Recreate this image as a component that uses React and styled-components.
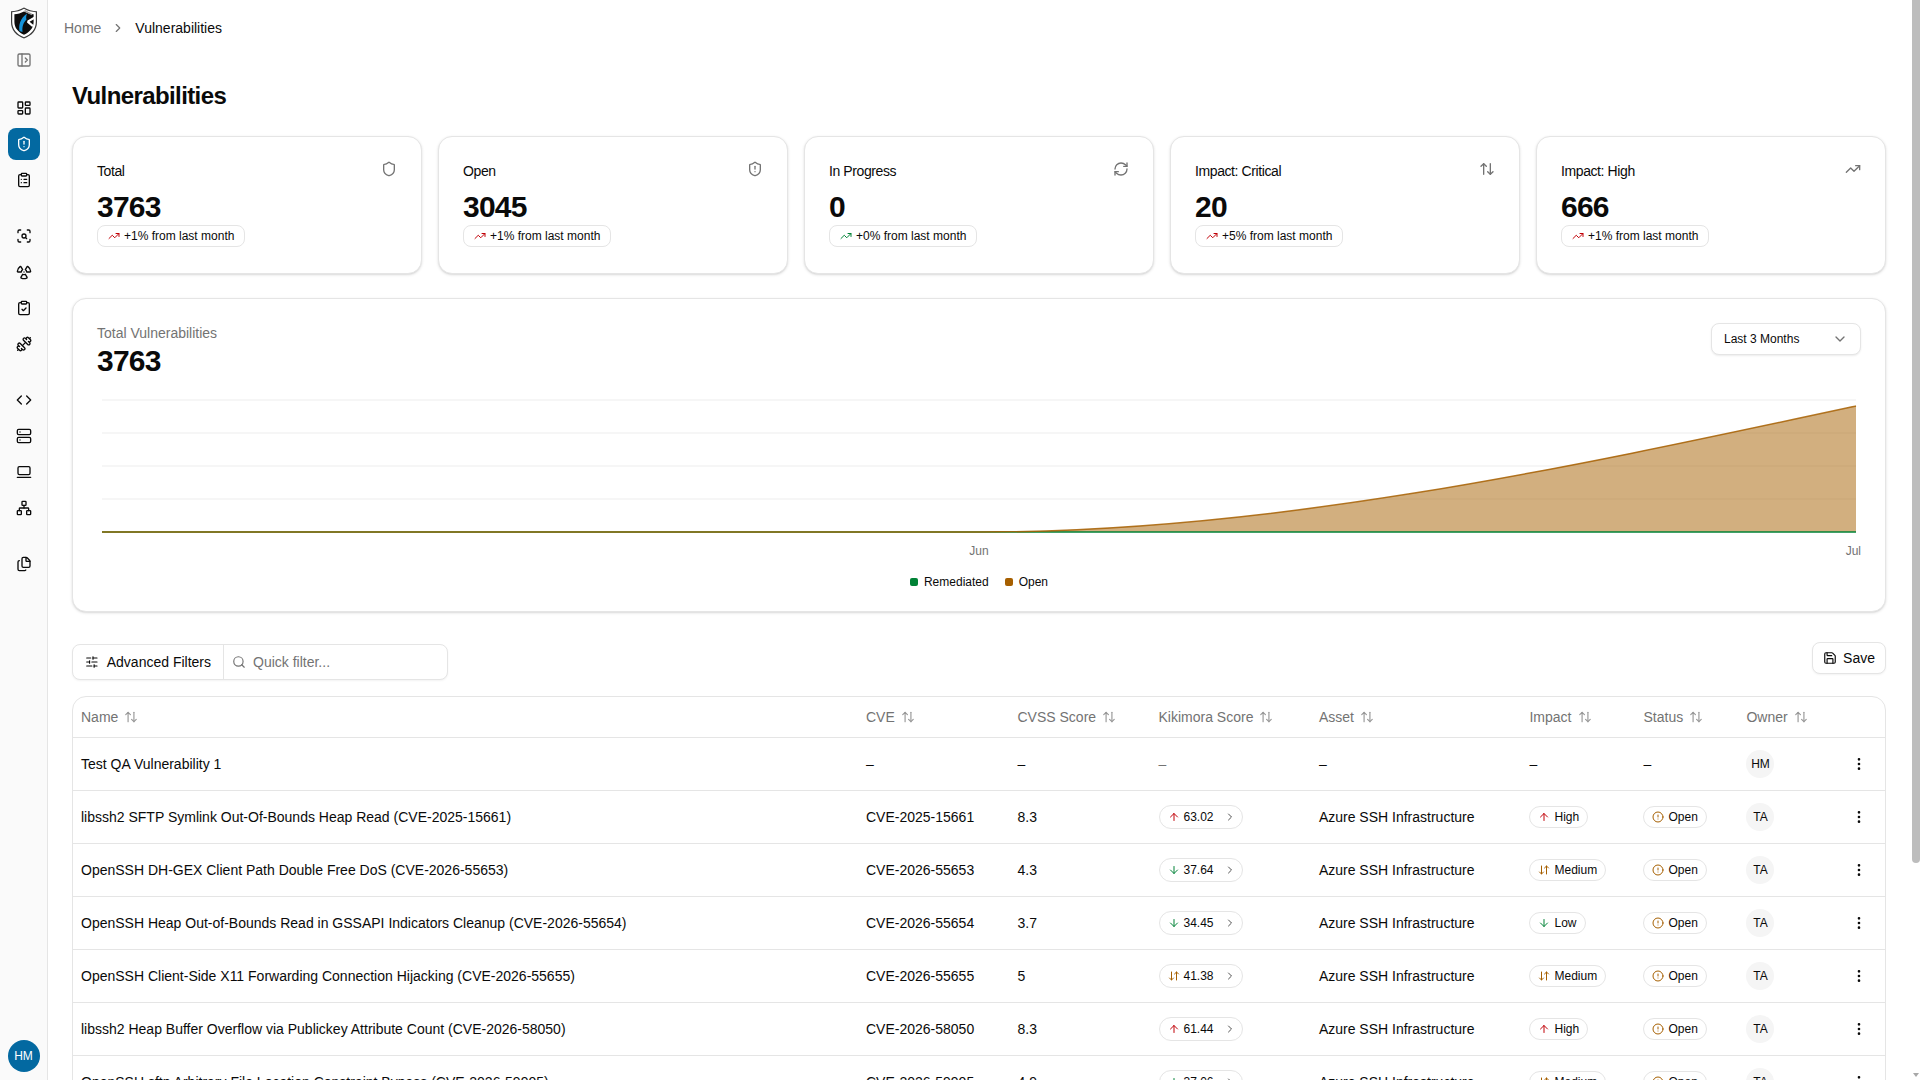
import React from 'react';
import styled, { createGlobalStyle } from 'styled-components';
import {
  PanelLeftOpen, LayoutDashboard, ShieldAlert, ClipboardList, ScanSearch, Radiation, ClipboardCheck,
  Dumbbell, Code, Server, LaptopMinimal, Network, Files, ChevronRight, ChevronDown, Shield, RefreshCw,
  ArrowUpDown, ArrowDownUp, TrendingUp, SlidersHorizontal, Search, Save, ArrowUp, ArrowDown,
  CircleAlert, EllipsisVertical,
} from 'lucide-react';

const RED = '#c10007';
const GREEN = '#008236';
const AMBER = '#a65f00';
const BRAND = '#0369a1';
const MUTED = '#737373';
const LINE = '#e5e5e5';
const INK = '#0a0a0a';

const Global = createGlobalStyle`
  html, body { height: 100%; overflow: hidden; }
  body { margin: 0; background: #fff; color: ${INK}; font-family: "Liberation Sans", Arial, sans-serif; font-size: 14px; line-height: 20px; }
  * { box-sizing: border-box; }
`;

const Shell = styled.div`display: flex; height: 100vh; position: relative;`;

const Sidebar = styled.aside`
  flex: 0 0 48px; height: 100vh;
  display: flex; flex-direction: column; align-items: center;
  padding: 7px 0 8px; background: #fafafa; border-right: 1px solid ${LINE};
`;
const LogoMark = styled.svg`display: block; width: 28px; height: 32px; flex: none;`;
const ToggleButton = styled.button`
  display: flex; margin: 13px 0 24px; padding: 0; border: 0; background: none; color: ${MUTED};
`;
const NavGroups = styled.nav`display: flex; flex-direction: column; gap: 24px;`;
const NavGroup = styled.div`display: flex; flex-direction: column; gap: 4px;`;
const NavButton = styled.button`
  display: flex; align-items: center; justify-content: center;
  width: 32px; height: 32px; padding: 0; border: 0; border-radius: 8px;
  color: ${p => (p.$active ? '#fff' : INK)};
  background: ${p => (p.$active ? BRAND : 'transparent')};
`;
const SideAvatar = styled.div`
  margin-top: auto; width: 32px; height: 32px; border-radius: 50%;
  display: flex; align-items: center; justify-content: center;
  background: ${BRAND}; color: #fff; font-size: 12px;
`;

const Main = styled.main`
  flex: 1; min-width: 0; height: 100vh; overflow-y: scroll; scrollbar-width: none; padding-right: 10px;
`;
const ScrollThumb = styled.div`
  position: absolute; top: 0; right: 0; width: 8px; height: 863px;
  background: #bdbdbd; border-radius: 0 0 4px 4px;
`;
const ScrollArrow = styled.div`
  position: absolute; bottom: 3px; right: 1px; width: 0; height: 0;
  border-left: 3px solid transparent; border-right: 3px solid transparent; border-top: 4px solid #a8a8a8;
`;
const Topbar = styled.header`display: flex; align-items: center; gap: 10px; height: 56px; padding: 0 16px;`;
const Crumb = styled.span`color: ${p => (p.$current ? INK : MUTED)};`;
const CrumbSep = styled(ChevronRight)`color: ${MUTED};`;
const Content = styled.div`padding: 24px 24px 232px;`;
const Title = styled.h1`margin: 0 0 24px; font-size: 24px; line-height: 32px; font-weight: 700; letter-spacing: -0.6px;`;

const StatGrid = styled.section`display: grid; grid-template-columns: repeat(5, 1fr); gap: 16px;`;
const Panel = styled.div`
  background: #fff; border: 1px solid ${LINE}; border-radius: 14px;
  box-shadow: 0 1px 3px rgba(0,0,0,.12), 0 1px 2px -1px rgba(0,0,0,.12);
`;
const StatCard = styled(Panel)`min-height: 138px; padding: 24px;`;
const StatHead = styled.div`display: flex; justify-content: space-between; align-items: flex-start;`;
const StatLabel = styled.div`font-size: 14px; line-height: 20px; letter-spacing: -0.4px;`;
const StatIcon = styled.span`display: flex; color: ${MUTED};`;
const BigNumber = styled.div`font-size: 30px; line-height: 36px; font-weight: 700; letter-spacing: -0.75px; margin-top: ${p => p.$mt || 0}px;`;
const TrendBadge = styled.span`
  display: inline-flex; align-items: center; gap: 4px; height: 22px; padding: 0 10px;
  border: 1px solid ${LINE}; border-radius: 8px; font-size: 12px; line-height: 16px; vertical-align: top;
  svg { color: ${p => (p.$tone === 'good' ? GREEN : RED)}; }
`;

const ChartCard = styled(Panel)`margin-top: 24px; padding: 24px 24px 21px;`;
const ChartHead = styled.div`display: flex; justify-content: space-between; align-items: flex-start;`;
const ChartLabel = styled.div`color: ${MUTED};`;
const RangeSelect = styled.button`
  display: flex; align-items: center; justify-content: space-between;
  width: 150px; height: 32px; padding: 0 12px; background: #fff; color: ${INK};
  border: 1px solid ${LINE}; border-radius: 8px; font: inherit; font-size: 12px;
  box-shadow: 0 1px 2px rgba(0,0,0,.08);
  svg { color: ${MUTED}; }
`;
const ChartSvg = styled.svg`display: block; width: 100%; height: 170px; margin-top: 16px;`;
const AxisText = styled.text`font-size: 12px; fill: ${MUTED}; font-family: "Liberation Sans", Arial, sans-serif;`;
const Legend = styled.div`display: flex; justify-content: center; gap: 16px; margin-top: 9px; font-size: 12px; line-height: 16px;`;
const LegendItem = styled.span`display: flex; align-items: center; gap: 6px;`;
const Swatch = styled.i`width: 8px; height: 8px; border-radius: 2px; background: ${p => p.$c};`;

const Toolbar = styled.div`display: flex; justify-content: space-between; align-items: flex-start; margin-top: 30px;`;
const FilterGroup = styled.div`
  display: flex; height: 36px; width: 376px; margin-top: 2px; border: 1px solid ${LINE}; border-radius: 8px;
  box-shadow: 0 1px 2px rgba(0,0,0,.05); background: #fff;
`;
const FilterButton = styled.button`
  display: flex; align-items: center; gap: 8px; width: 151px; padding: 0 12px; flex: none; white-space: nowrap;
  border: 0; border-right: 1px solid ${LINE}; background: none; color: ${INK}; font: inherit;
`;
const QuickFilter = styled.label`
  display: flex; align-items: center; gap: 7px; flex: 1; padding: 0 8px; color: ${MUTED};
`;
const QuickInput = styled.input`
  flex: 1; min-width: 0; border: 0; outline: 0; padding: 0; font: inherit; color: ${INK};
  &::placeholder { color: ${MUTED}; opacity: 1; }
`;
const SaveButton = styled.button`
  display: flex; align-items: center; gap: 6px; height: 32px; padding: 0 10px; background: #fff; color: ${INK};
  border: 1px solid ${LINE}; border-radius: 8px; font: inherit; box-shadow: 0 1px 2px rgba(0,0,0,.05);
`;

const TableWrap = styled.div`margin-top: 16px; border: 1px solid ${LINE}; border-radius: 14px; overflow: hidden;`;
const Table = styled.table`width: 100%; table-layout: fixed; border-collapse: separate; border-spacing: 0;`;
const Col = styled.col`width: ${p => p.$w}px;`;
const Th = styled.th`
  height: 41px; padding: 0 8px; text-align: left; font-weight: 400; color: ${MUTED};
  border-bottom: 1px solid ${LINE};
`;
const ThInner = styled.span`display: inline-flex; align-items: center; gap: 6px; svg { color: #999; }`;
const Td = styled.td`
  height: 53px; padding: 0 8px; border-bottom: 1px solid ${LINE}; white-space: nowrap;
  color: ${p => (p.$muted ? MUTED : INK)};
`;
const Pill = styled.span`
  display: inline-flex; align-items: center; gap: 4px; height: 22px; padding: 0 8px;
  border: 1px solid ${LINE}; border-radius: 999px; font-size: 12px; line-height: 16px; vertical-align: middle;
  svg { color: ${p => p.$c}; }
`;
const ScorePill = styled(Pill)`
  height: 24px; width: 84px; padding-right: 6px;
  svg:last-child { color: #525252; margin-left: auto; }
`;
const OwnerAvatar = styled.span`
  display: inline-flex; align-items: center; justify-content: center; width: 28px; height: 28px;
  border-radius: 50%; background: #f5f5f5; font-size: 12px; vertical-align: middle;
`;
const RowMenu = styled.button`
  display: flex; align-items: center; justify-content: center; width: 24px; height: 24px;
  padding: 0; border: 0; background: none; color: ${INK};
`;

const Logo = () => (
  <LogoMark viewBox="0 0 28 32" aria-label="logo">
    <path d="M14 .4C10 2.8 5.5 4 1 4.2V15c0 8 5 13.6 13 16.6C22 28.6 27 23 27 15V4.2C22.5 4 18 2.8 14 .4Z" fill="#3a3a3a" />
    <path d="M14 1.8C10.4 3.9 6.4 5 2.2 5.3V15c0 7.2 4.6 12.4 11.8 15.2C21.2 27.4 25.8 22.2 25.8 15V5.3C21.6 5 17.6 3.9 14 1.8Z" fill="#fff" />
    <path d="M14 4.4C11 6 7.6 7 4.4 7.2V15c0 5.8 3.8 10.2 9.6 12.7 5.8-2.5 9.6-6.9 9.6-12.7V7.2C20.4 7 17 6 14 4.4Z" fill="#0c0c0c" />
    <path d="M9.5 24C8.5 18 10 11.5 17 6.5c-1 3-1 4.5-.5 6-3 3-4.5 6.5-4 12.5-1.2-.2-2-.5-3-1Z" fill="#1592d8" />
    <path d="M17.5 13.5 24 9.8v2.4l-4.5 2.5 4 3.2-1.2 2-5.3-4.3Z" fill="#fff" />
    <path d="M15 3 22.5 7l-1 1.3L14 4.2Z" fill="#9a9a9a" />
  </LogoMark>
);

const navGroups = [
  [[LayoutDashboard], [ShieldAlert, true], [ClipboardList]],
  [[ScanSearch], [Radiation], [ClipboardCheck], [Dumbbell]],
  [[Code], [Server], [LaptopMinimal], [Network]],
  [[Files]],
];

const stats = [
  ['Total', '3763', '+1%', Shield, 'bad'],
  ['Open', '3045', '+1%', ShieldAlert, 'bad'],
  ['In Progress', '0', '+0%', RefreshCw, 'good'],
  ['Impact: Critical', '20', '+5%', ArrowUpDown, 'bad'],
  ['Impact: High', '666', '+1%', TrendingUp, 'bad'],
];

const gridYs = [400, 433, 466, 499];
const OFF_X = 97;
const OFF_Y = 395;
const X = v => v - OFF_X;
const Y = v => v - OFF_Y;
const PLOT_END = 1856;
const curve = `M${X(102)} ${Y(532)} L${X(979)} ${Y(532)} C${X(1272)} ${Y(532)} ${X(1563)} ${Y(469)} ${X(PLOT_END)} ${Y(406)}`;

const columns = [
  ['Name', 785], ['CVE', 151.5], ['CVSS Score', 141], ['Kikimora Score', 160.4], ['Asset', 210.6],
  ['Impact', 114], ['Status', 103], ['Owner', 100.8], ['', 45.7],
];

const levelIcon = {
  up: [ArrowUp, RED],
  down: [ArrowDown, GREEN],
  mid: [ArrowDownUp, AMBER],
};
const impacts = { High: 'up', Medium: 'mid', Low: 'down' };

const rows = [
  ['libssh2 SFTP Symlink Out-Of-Bounds Heap Read (CVE-2025-15661)', 'CVE-2025-15661', '8.3', '63.02', 'up', 'High'],
  ['OpenSSH DH-GEX Client Path Double Free DoS (CVE-2026-55653)', 'CVE-2026-55653', '4.3', '37.64', 'down', 'Medium'],
  ['OpenSSH Heap Out-of-Bounds Read in GSSAPI Indicators Cleanup (CVE-2026-55654)', 'CVE-2026-55654', '3.7', '34.45', 'down', 'Low'],
  ['OpenSSH Client-Side X11 Forwarding Connection Hijacking (CVE-2026-55655)', 'CVE-2026-55655', '5', '41.38', 'mid', 'Medium'],
  ['libssh2 Heap Buffer Overflow via Publickey Attribute Count (CVE-2026-58050)', 'CVE-2026-58050', '8.3', '61.44', 'up', 'High'],
  ['OpenSSH sftp Arbitrary File Location Constraint Bypass (CVE-2026-59905)', 'CVE-2026-59905', '4.9', '37.06', 'down', 'Medium'],
];

const Level = ({ kind, size = 12 }) => {
  const [Icon] = levelIcon[kind];
  return <Icon size={size} />;
};

export default function App() {
  return (
    <>
      <Global />
      <Shell>
        <Sidebar>
          <Logo />
          <ToggleButton aria-label="Toggle sidebar"><PanelLeftOpen size={16} /></ToggleButton>
          <NavGroups>
            {navGroups.map((group, i) => (
              <NavGroup key={i}>
                {group.map(([Icon, active], j) => (
                  <NavButton key={j} $active={active}><Icon size={16} /></NavButton>
                ))}
              </NavGroup>
            ))}
          </NavGroups>
          <SideAvatar>HM</SideAvatar>
        </Sidebar>
        <Main>
          <Topbar>
            <Crumb>Home</Crumb>
            <CrumbSep size={14} />
            <Crumb $current>Vulnerabilities</Crumb>
          </Topbar>
          <Content>
            <Title>Vulnerabilities</Title>
            <StatGrid>
              {stats.map(([label, value, delta, Icon, tone]) => (
                <StatCard key={label}>
                  <StatHead>
                    <StatLabel>{label}</StatLabel>
                    <StatIcon><Icon size={16} /></StatIcon>
                  </StatHead>
                  <BigNumber $mt={8}>{value}</BigNumber>
                  <TrendBadge $tone={tone}><TrendingUp size={12} />{delta} from last month</TrendBadge>
                </StatCard>
              ))}
            </StatGrid>

            <ChartCard>
              <ChartHead>
                <div>
                  <ChartLabel>Total Vulnerabilities</ChartLabel>
                  <BigNumber>3763</BigNumber>
                </div>
                <RangeSelect>Last 3 Months<ChevronDown size={16} /></RangeSelect>
              </ChartHead>
              <ChartSvg viewBox="0 0 1764 170" preserveAspectRatio="none">
                {gridYs.map(y => (
                  <line key={y} x1={X(102)} x2={X(PLOT_END)} y1={Y(y)} y2={Y(y)} stroke="#f3f3f3" strokeWidth="1.5" />
                ))}
                <path d={`${curve} L${X(PLOT_END)} ${Y(532)} Z`} fill={AMBER} fillOpacity="0.5" />
                <line x1={X(102)} x2={X(PLOT_END)} y1={Y(532)} y2={Y(532)} stroke={GREEN} strokeWidth="1.5" />
                <path d={curve} fill="none" stroke={AMBER} strokeWidth="1.5" strokeOpacity="0.85" />
                <AxisText x={X(979)} y={Y(555)} textAnchor="middle">Jun</AxisText>
                <AxisText x={X(1861)} y={Y(555)} textAnchor="end">Jul</AxisText>
              </ChartSvg>
              <Legend>
                <LegendItem><Swatch $c={GREEN} />Remediated</LegendItem>
                <LegendItem><Swatch $c={AMBER} />Open</LegendItem>
              </Legend>
            </ChartCard>

            <Toolbar>
              <FilterGroup>
                <FilterButton><SlidersHorizontal size={14} />Advanced Filters</FilterButton>
                <QuickFilter>
                  <Search size={14} />
                  <QuickInput placeholder="Quick filter..." />
                </QuickFilter>
              </FilterGroup>
              <SaveButton><Save size={14} />Save</SaveButton>
            </Toolbar>

            <TableWrap>
              <Table>
                <colgroup>{columns.map(([n, w], i) => <Col key={i} $w={w} />)}</colgroup>
                <thead>
                  <tr>
                    {columns.map(([n], i) => (
                      <Th key={i}>{n && <ThInner>{n}<ArrowUpDown size={14} /></ThInner>}</Th>
                    ))}
                  </tr>
                </thead>
                <tbody>
                  <tr>
                    <Td>Test QA Vulnerability 1</Td>
                    <Td>–</Td>
                    <Td>–</Td>
                    <Td $muted>–</Td>
                    <Td>–</Td>
                    <Td>–</Td>
                    <Td>–</Td>
                    <Td><OwnerAvatar>HM</OwnerAvatar></Td>
                    <Td><RowMenu><EllipsisVertical size={16} /></RowMenu></Td>
                  </tr>
                  {rows.map(([name, cve, cvss, score, trend, impact]) => (
                    <tr key={cve}>
                      <Td>{name}</Td>
                      <Td>{cve}</Td>
                      <Td>{cvss}</Td>
                      <Td>
                        <ScorePill $c={levelIcon[trend][1]}>
                          <Level kind={trend} />{score}<ChevronRight size={12} />
                        </ScorePill>
                      </Td>
                      <Td>Azure SSH Infrastructure</Td>
                      <Td><Pill $c={levelIcon[impacts[impact]][1]}><Level kind={impacts[impact]} />{impact}</Pill></Td>
                      <Td><Pill $c={AMBER}><CircleAlert size={12} />Open</Pill></Td>
                      <Td><OwnerAvatar>TA</OwnerAvatar></Td>
                      <Td><RowMenu><EllipsisVertical size={16} /></RowMenu></Td>
                    </tr>
                  ))}
                </tbody>
              </Table>
            </TableWrap>
          </Content>
        </Main>
        <ScrollThumb />
        <ScrollArrow />
      </Shell>
    </>
  );
}
